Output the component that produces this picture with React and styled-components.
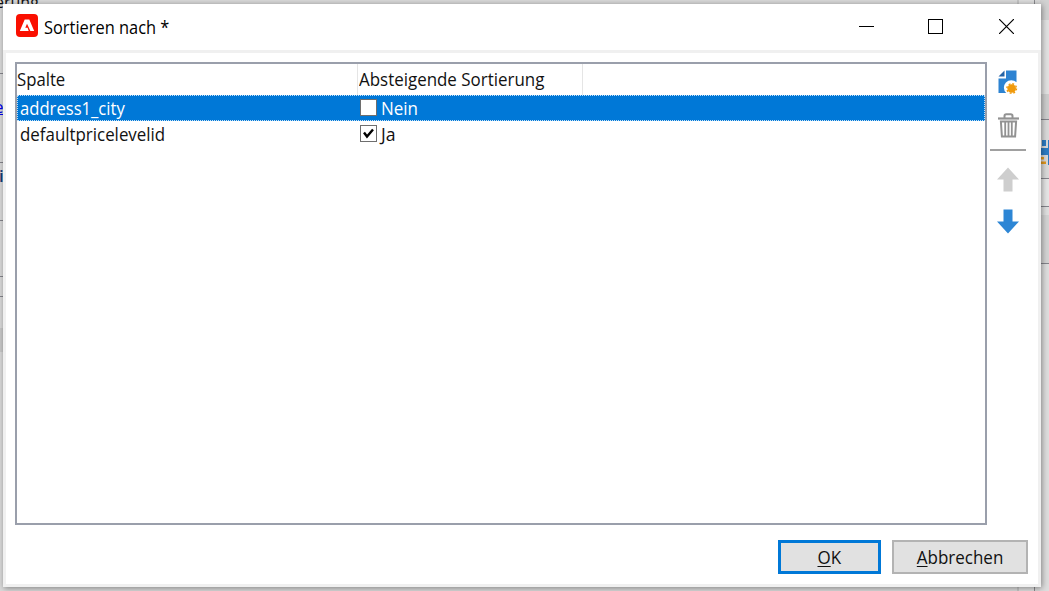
import React from "react";
import styled, { createGlobalStyle } from "styled-components";

const Global = createGlobalStyle`
  *{box-sizing:border-box}
  html,body{margin:0;width:1049px;height:591px;overflow:hidden}
  body{font-family:"Open Sans","Noto Sans",sans-serif;color:#111}
`;
const Desktop = styled.div`
  position:relative;width:1049px;height:591px;overflow:hidden;
  background:linear-gradient(90deg,#d9d9d9 1017px,#c4c4c4 1017px 1019px,#dedede 1019px 1034px,#8a8a8e 1034px 1035px,#d9d9d9 1035px);
  display:flex;justify-content:space-between;
`;
const Strip = styled.div`
  display:flex;flex-direction:column;width:${p => p.$w}px;height:591px;
  font-size:17px;line-height:20px;overflow:hidden;
`;
const Piece = styled.div`
  flex:none;height:${p => p.$h}px;background:${p => p.$c || "#dadada"};
  border-top:${p => (p.$line ? "1px solid #85858c" : "0")};
  color:${p => p.$ink || "#222"};overflow:hidden;
  text-indent:${p => p.$in || 0}px;text-decoration:${p => (p.$link ? "underline" : "none")};
  font-weight:${p => (p.$link ? 400 : 600)};
`;
const SaveGlyph = styled.div`
  flex:none;height:25px;background:#dadada;
  svg{display:block}
`;
const Behind = styled.div`
  position:absolute;left:-5px;top:-8px;font-size:16px;line-height:20px;height:20px;
`;
const Dialog = styled.section`
  position:absolute;left:3px;top:4px;width:1038px;height:583px;background:#fff;
  display:flex;flex-direction:column;box-shadow:1px 1px 6px rgba(0,0,0,.42);
`;
const TitleBar = styled.header`
  height:46px;display:flex;align-items:center;padding-left:13px;
  svg{display:block;flex:none}
`;
const LogoBox = styled.div`margin-top:-3px;`;
const Title = styled.h1`
  margin:0 0 0 6px;flex:1;font-size:17.7px;font-weight:400;line-height:24px;white-space:nowrap;color:#000;
`;
const Fit = styled.span`
  display:inline-block;white-space:pre;transform-origin:${p => (p.$mid ? "50%" : "0")} 50%;
  transform:scaleX(${p => p.$x || 1});
`;
const Controls = styled.div`
  display:flex;gap:54px;padding-right:27px;margin-top:-1px;
  svg:last-child{margin-left:2px}
`;
const Client = styled.div`
  flex:1;display:flex;flex-direction:column;border:3px solid #f0f0f0;padding:9px 10px 0 9px;
`;
const Main = styled.div`display:flex;height:463px;`;
const List = styled.div`
  flex:none;width:972px;height:463px;border:2px solid #9a9fab;background:#fff;
`;
const Head = styled.div`
  display:flex;height:31px;font-size:17.7px;line-height:30px;
`;
const HeadCell = styled.div`
  width:${p => p.$w}px;padding-left:${p => p.$pad || 0}px;border-right:1px solid #e5e5e5;white-space:nowrap;
`;
const Row = styled.div`
  display:flex;height:26px;align-items:center;font-size:17.7px;line-height:24px;
  color:${p => (p.$on ? "#fff" : "#111")};
  background:${p => (p.$on ? "#0078d7" : "#fff")};
  outline:${p => (p.$on ? "1px dotted #c4e2fa" : "none")};outline-offset:-1px;
`;
const Cell = styled.div`
  display:flex;align-items:center;width:${p => p.$w}px;padding-left:3px;white-space:nowrap;
`;
const Check = styled.span`
  width:17px;height:17px;border:1.5px solid #6e6e6e;background:#fff;margin:-2px 4px 0 0;flex:none;
  svg{display:block}
`;
const Tools = styled.aside`
  width:36px;margin-left:3px;padding-top:8px;display:flex;flex-direction:column;align-items:center;
  svg{display:block;flex:none}
`;
const Group = styled.div`
  display:flex;flex-direction:column;align-items:center;gap:${p => p.$gap}px;
`;
const Rule = styled.hr`
  width:36px;height:2px;border:0;background:#a0a0a0;margin:11px 0 16px;flex:none;
`;
const Footer = styled.footer`
  display:flex;justify-content:flex-end;gap:11px;margin-top:15px;
`;
const Button = styled.button`
  width:${p => p.$w}px;height:34px;padding:0;background:#e1e1e1;color:#111;
  border:${p => (p.$main ? "3px solid #0078d7" : "2px solid #b3b3b3")};
  font:17.7px/26px "Open Sans","Noto Sans",sans-serif;
`;
const Key = styled.span`text-decoration:underline;text-underline-offset:2px;`;

const Logo = () => (
  <svg width="22" height="23" viewBox="0 0 22 23">
    <rect width="22" height="23" rx="4" fill="#fa0f00" />
    <path d="M8.7 5.500h4.600l4.900 11.500h-3.800L11 9.800l-1.700 4h2.300l1.100 3.200H3.800z" fill="#fff" />
  </svg>
);
const NewItem = () => (
  <svg width="20" height="24" viewBox="0 0 20 24">
    <path d="M8 0.500h10.500v11.700a7.200 7.200 0 0 0-10.300 10.800H0.500V8.500H8z" fill="#2d83d2" />
    <path d="M0.500 6.500 6.500 .5v6z" fill="#2463a6" />
    <circle cx="13.700" cy="18.500" r="4.300" fill="#f09a0c" />
    <circle cx="13.700" cy="18.500" r="4.800" fill="none" stroke="#f09a0c" strokeWidth="1.400" strokeDasharray="1.900 1.870" />
  </svg>
);
const Trash = () => (
  <svg width="21" height="25" viewBox="0 0 21 25" fill="none" stroke="#929292">
    <path d="M0 5.500h21" strokeWidth="2.200" />
    <path d="M6.500 5V3Q6.500 1.200 8.300 1.200h4.400q1.800 0 1.800 1.800V5" strokeWidth="2" />
    <path d="M2.900 8.500h15.200l-1 15H3.900z" strokeWidth="2" />
    <path d="M7.200 9v14M10.500 9v14M13.800 9v14" strokeWidth="1.800" />
  </svg>
);
const Arrow = ({ down }) => (
  <svg width="22" height="25" viewBox="0 0 22 25">
    <path
      d={down ? "M6.500 .5h9v12H22L11 24.500 0 12.500h6.500z" : "M11 .5 22 12.500h-6.500v12h-9v-12H0z"}
      fill={down ? "#2d86d5" : "#cecece"}
    />
  </svg>
);

export default function App() {
  return (
    <>
      <Global />
      <Desktop>
        <Strip $w={4}>
          <Piece $h={73} /><Piece $h={24} $line />
          <Piece $h={65} $ink="#0000ee" $in={-6} $link>e</Piece>
          <Piece $h={4} $line />
          <Piece $h={54} $ink="#123a78" $in={-1}>i</Piece>
          <Piece $h={56} $line /><Piece $h={20} $line /><Piece $h={32} $line />
          <Piece $h={24} $c="#cacaca" /><Piece $h={239} />
        </Strip>
        <Behind>erung</Behind>
        <Strip $w={9}>
          <Piece $h={20} $c="#d2d2d2" /><Piece $h={74} $c="#e2e2e2" /><Piece $h={25} $c="#cecece" />
          <Piece $h={21} $line $c="#dadada" />
          <SaveGlyph>
            <svg width="9" height="25" viewBox="0 0 9 25">
              <path d="M0 8h9v7H0zM2 0h4v6H2zM8 0h1v25H8z" fill="#2d7cc4" />
              <path d="M0 17h4v2.500H0zM0 21.500h6V24H0z" fill="#e59a1e" />
            </svg>
          </SaveGlyph>
          <Piece $h={13} /><Piece $h={28} $line $c="#e6e6e6" />
          <Piece $h={9} $line $c="#e0e0e0" />
          <Piece $h={48} $c="#d4d4d4" /><Piece $h={328} $line $c="#dedede" />
        </Strip>
        <Dialog>
          <TitleBar>
            <LogoBox><Logo /></LogoBox>
            <Title><Fit $x={0.927}>Sortieren nach *</Fit></Title>
            <Controls>
              <svg width="15" height="15"><path d="M0 7.500h15" stroke="#000" /></svg>
              <svg width="15" height="15"><rect x=".5" y=".5" width="14" height="14" fill="none" stroke="#000" /></svg>
              <svg width="15" height="15"><path d="m0 0 15 15M15 0 0 15" stroke="#000" strokeWidth="1.200" /></svg>
            </Controls>
          </TitleBar>
          <Client>
            <Main>
              <List>
                <Head>
                  <HeadCell $w={341}><Fit $x={0.945}>Spalte</Fit></HeadCell>
                  <HeadCell $w={225} $pad={1}><Fit $x={0.957}>Absteigende Sortierung</Fit></HeadCell>
                </Head>
                <Row $on>
                  <Cell $w={340}><Fit $x={0.94}>address1_city</Fit></Cell>
                  <Cell><Check /><Fit $x={0.96}>Nein</Fit></Cell>
                </Row>
                <Row>
                  <Cell $w={340}><Fit $x={0.955}>defaultpricelevelid</Fit></Cell>
                  <Cell>
                    <Check>
                      <svg width="15" height="15"><path d="m3 6.500 3 4 6-7" fill="none" stroke="#000" strokeWidth="2.400" /></svg>
                    </Check>
                    <Fit>Ja</Fit>
                  </Cell>
                </Row>
              </List>
              <Tools>
                <Group $gap={19}><NewItem /><Trash /></Group>
                <Rule />
                <Group $gap={17}><Arrow /><Arrow down /></Group>
              </Tools>
            </Main>
            <Footer>
              <Button $w={103} $main><Fit $mid $x={0.96}><Key>O</Key>K</Fit></Button>
              <Button $w={136}><Fit $mid $x={0.96}><Key>A</Key>bbrechen</Fit></Button>
            </Footer>
          </Client>
        </Dialog>
      </Desktop>
    </>
  );
}
